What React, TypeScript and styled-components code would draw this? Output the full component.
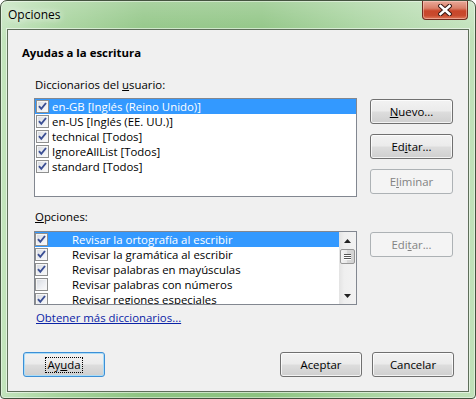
import React from "react";
import styled, { createGlobalStyle } from "styled-components";

const Global = createGlobalStyle`
  html, body {
    margin: 0;
    padding: 0;
    background: #ffffff;
  }
  body {
    font-family: "Segoe UI", "Open Sans", "Noto Sans", sans-serif;
    font-size: 11.4px;
    color: #000;
  }
`;

const Window = styled.div`
  width: 476px;
  height: 399px;
  box-sizing: border-box;
  display: flex;
  flex-direction: column;
  border: 1px solid #44533f;
  border-radius: 7px 7px 4px 4px;
  overflow: hidden;
  background:
    linear-gradient(rgba(255, 255, 255, 0.25), rgba(255, 255, 255, 0) 40px),
    linear-gradient(90deg, #c3e4bd 0%, #a7d49d 12%, #8ec482 30%, #8cc380 55%, #a6d39d 75%, #b7dcb0 90%, #c0e1b9 100%);
  box-shadow: inset 0 0 0 1px rgba(255, 255, 255, 0.45);
`;

const TitleBar = styled.div`
  height: 28px;
  flex: 0 0 auto;
  display: flex;
  align-items: flex-start;
  padding: 0 7px 0 7px;
`;

const Title = styled.div`
  align-self: center;
  font-size: 12px;
  line-height: 16px;
  text-shadow: 0 0 6px rgba(255, 255, 255, 0.95), 0 0 10px rgba(255, 255, 255, 0.7);
`;

const Spacer = styled.div`
  flex: 1 1 auto;
`;

const CloseButton = styled.div`
  width: 46px;
  height: 19px;
  box-sizing: border-box;
  display: flex;
  align-items: center;
  justify-content: center;
  border: 1px solid #6e2b1e;
  border-top: none;
  border-radius: 0 0 4px 4px;
  background: linear-gradient(#e9a999 0%, #d98069 40%, #c9462a 55%, #c84a2e 80%, #e0795a 100%);
  box-shadow: inset 0 0 0 1px rgba(255, 220, 210, 0.45);
`;

const Client = styled.div`
  flex: 1 1 auto;
  margin: 0 6px 6px 6px;
  display: flex;
  flex-direction: column;
  padding: 15px 14px 14px 14px;
  background: #f0f0f0;
  border: 1px solid #5e6e5a;
  box-shadow: 0 0 0 1px rgba(255, 255, 255, 0.55);
`;

const Heading = styled.div`
  font-weight: bold;
  line-height: 16px;
`;

const Group = styled.div`
  display: flex;
  flex-direction: column;
  padding-left: 12px;
`;

const Label = styled.div<{ $top: number }>`
  line-height: 16px;
  padding-left: 1px;
  margin-top: ${(p) => p.$top}px;
`;

const Key = styled.span`
  text-decoration: underline;
`;

const Row = styled.div<{ $top: number }>`
  display: flex;
  align-items: flex-start;
  gap: 13px;
  margin-top: ${(p) => p.$top}px;
`;

const ListBox = styled.div<{ $height: number }>`
  width: 323px;
  height: ${(p) => p.$height}px;
  box-sizing: border-box;
  border: 1px solid #828790;
  background: #ffffff;
  display: flex;
  overflow: hidden;
`;

const Items = styled.div`
  flex: 1 1 auto;
  display: flex;
  flex-direction: column;
`;

const Item = styled.div<{ $selected?: boolean; $gap: number; $pad: number }>`
  height: 15px;
  flex: 0 0 auto;
  display: flex;
  align-items: center;
  gap: ${(p) => p.$gap}px;
  padding-left: ${(p) => p.$pad}px;
  white-space: nowrap;
  line-height: 15px;
  background: ${(p) => (p.$selected ? "#3399ff" : "transparent")};
  color: ${(p) => (p.$selected ? "#ffffff" : "#000000")};
`;

const Box = styled.span`
  width: 13px;
  height: 13px;
  box-sizing: border-box;
  flex: 0 0 auto;
  border: 1px solid #8e8f8f;
  background: linear-gradient(135deg, #d6d9df 0%, #eceef2 55%, #fbfbfb 100%);
  box-shadow: inset 0 0 0 1px #f6f6f6;
  display: flex;
  align-items: center;
  justify-content: center;
`;

const ScrollBar = styled.div`
  width: 17px;
  flex: 0 0 auto;
  display: flex;
  flex-direction: column;
  background: linear-gradient(90deg, #e3e3e3 0%, #efefef 30%, #f2f2f2 100%);
`;

const Arrow = styled.div`
  height: 17px;
  display: flex;
  align-items: center;
  justify-content: center;
`;

const Thumb = styled.div`
  height: 15px;
  margin: 0 1px;
  box-sizing: border-box;
  border: 1px solid #979797;
  border-radius: 2px;
  background: linear-gradient(90deg, #f3f3f3, #e6e6e6 50%, #d8d8d8 50%, #d3d3d3);
  display: flex;
  flex-direction: column;
  align-items: center;
  justify-content: center;
  gap: 1px;
`;

const Grip = styled.span`
  width: 7px;
  height: 1px;
  background: #555;
  box-shadow: 0 1px 0 #fff;
`;

const Track = styled.div`
  flex: 1 1 auto;
`;

const Buttons = styled.div`
  display: flex;
  flex-direction: column;
  gap: 10px;
  padding-top: 1px;
`;

const Button = styled.div<{ $disabled?: boolean; $focused?: boolean; $width?: number }>`
  width: ${(p) => p.$width ?? 83}px;
  height: 25px;
  box-sizing: border-box;
  display: flex;
  align-items: center;
  justify-content: center;
  border-radius: 3px;
  border: 1px solid ${(p) => (p.$disabled ? "#adb2b5" : p.$focused ? "#3c8fd6" : "#707070")};
  background: ${(p) =>
    p.$disabled
      ? "#f4f4f4"
      : "linear-gradient(#f2f2f2 0%, #ebebeb 48%, #dddddd 52%, #cfcfcf 100%)"};
  box-shadow: inset 0 0 0 1px
    ${(p) => (p.$disabled ? "#f4f4f4" : p.$focused ? "#aadcf7" : "rgba(255,255,255,0.75)")};
  color: ${(p) => (p.$disabled ? "#838383" : "#000")};
  line-height: 15px;
`;

const FocusRect = styled.span`
  outline: 1px dotted #000;
  outline-offset: 0;
  padding: 0 1px;
  line-height: 14px;
`;

const LinkText = styled.div`
  margin-top: 5px;
  padding-left: 2px;
  line-height: 16px;
  color: #0a23a6;
  text-decoration: underline;
`;

const Footer = styled.div`
  margin-top: auto;
  display: flex;
  align-items: center;
  gap: 10px;
  padding-left: 1px;
`;

const Check = () => (
  <svg width="11" height="11" viewBox="0 0 11 11">
    <path d="M2 5.2 L4.3 7.8 L9 2" fill="none" stroke="#3b4f94" strokeWidth="1.9" strokeLinejoin="miter" />
  </svg>
);

const CheckBox = ({ checked }: { checked: boolean }) => <Box>{checked && <Check />}</Box>;

const CloseGlyph = () => (
  <svg width="14" height="12" viewBox="0 0 14 12">
    <path d="M2.5 2 L11.5 10 M11.5 2 L2.5 10" stroke="#3a1a14" strokeWidth="4.6" strokeLinecap="square" />
    <path d="M2.5 2 L11.5 10 M11.5 2 L2.5 10" stroke="#ffffff" strokeWidth="2.6" strokeLinecap="square" />
  </svg>
);

const Triangle = ({ down }: { down?: boolean }) => (
  <svg width="7" height="4" viewBox="0 0 7 4">
    <path d={down ? "M0 0 H7 L3.5 4 Z" : "M0 4 H7 L3.5 0 Z"} fill="#222" />
  </svg>
);

const dictionaries = [
  "en-GB [Inglés (Reino Unido)]",
  "en-US [Inglés (EE. UU.)]",
  "technical [Todos]",
  "IgnoreAllList [Todos]",
  "standard [Todos]",
];

const options: [string, boolean][] = [
  ["Revisar la ortografía al escribir", true],
  ["Revisar la gramática al escribir", true],
  ["Revisar palabras en mayúsculas", true],
  ["Revisar palabras con números", false],
  ["Revisar regiones especiales", true],
];

export default function App() {
  return (
    <>
      <Global />
      <Window>
        <TitleBar>
          <Title>Opciones</Title>
          <Spacer />
          <CloseButton>
            <CloseGlyph />
          </CloseButton>
        </TitleBar>
        <Client>
          <Heading>Ayudas a la escritura</Heading>
          <Group>
            <Label $top={16}>
              Diccionarios del <Key>u</Key>suario:
            </Label>
            <Row $top={5}>
              <ListBox $height={99}>
                <Items>
                  {dictionaries.map((d, i) => (
                    <Item key={d} $selected={i === 0} $gap={3} $pad={1}>
                      <CheckBox checked />
                      {d}
                    </Item>
                  ))}
                </Items>
              </ListBox>
              <Buttons>
                <Button>
                  <span>
                    <Key>N</Key>uevo...
                  </span>
                </Button>
                <Button>
                  <span>
                    Ed<Key>i</Key>tar...
                  </span>
                </Button>
                <Button $disabled>
                  <span>
                    E<Key>l</Key>iminar
                  </span>
                </Button>
              </Buttons>
            </Row>
            <Label $top={12}>
              <Key>O</Key>pciones:
            </Label>
            <Row $top={6}>
              <ListBox $height={74}>
                <Items>
                  {options.map(([t, c], i) => (
                    <Item key={t} $selected={i === 0} $gap={24} $pad={0}>
                      <CheckBox checked={c} />
                      {t}
                    </Item>
                  ))}
                </Items>
                <ScrollBar>
                  <Arrow>
                    <Triangle />
                  </Arrow>
                  <Thumb>
                    <Grip />
                    <Grip />
                    <Grip />
                  </Thumb>
                  <Track />
                  <Arrow>
                    <Triangle down />
                  </Arrow>
                </ScrollBar>
              </ListBox>
              <Buttons>
                <Button $disabled>
                  <span>
                    Edi<Key>t</Key>ar...
                  </span>
                </Button>
              </Buttons>
            </Row>
            <LinkText>Obtener más diccionarios...</LinkText>
          </Group>
          <Footer>
            <Button $focused $width={82}>
              <FocusRect>
                Ay<Key>u</Key>da
              </FocusRect>
            </Button>
            <Spacer />
            <Button $width={82}>Aceptar</Button>
            <Button $width={82}>Cancelar</Button>
          </Footer>
        </Client>
      </Window>
    </>
  );
}
